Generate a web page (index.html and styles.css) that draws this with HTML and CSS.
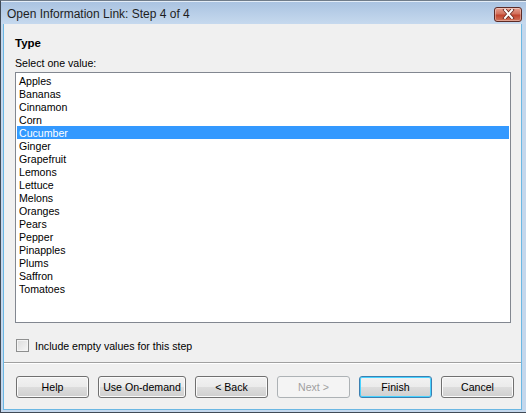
FILE: index.html
```html
<!DOCTYPE html>
<html lang="en">

    <head>
        <meta charset="UTF-8">
        <meta name="viewport" content="width=device-width, initial-scale=1.0">
        <title>Open Information Link</title>
        <link rel="stylesheet" href="styles.css">
    </head>

    <body>
        <div class="window">
            <div class="titlebar">
                <span class="title">Open Information Link: Step 4 of 4</span>
                <button class="btn-close" type="button">
                    <svg width="17" height="10" viewBox="0 0 17 10">
                        <path d="M5 1 L12 9 M12 1 L5 9" stroke="#6a2a22" stroke-width="3.6" stroke-linecap="square" />
                        <path d="M5 1 L12 9 M12 1 L5 9" stroke="#ffffff" stroke-width="2" stroke-linecap="square" />
                    </svg>
                </button>
            </div>
            <div class="client">
                <div class="content">
                    <div class="step-name">Type</div>
                    <div class="prompt">Select one value:</div>
                    <ul class="listbox">
                        <li>Apples</li>
                        <li>Bananas</li>
                        <li>Cinnamon</li>
                        <li>Corn</li>
                        <li class="selected">Cucumber</li>
                        <li>Ginger</li>
                        <li>Grapefruit</li>
                        <li>Lemons</li>
                        <li>Lettuce</li>
                        <li>Melons</li>
                        <li>Oranges</li>
                        <li>Pears</li>
                        <li>Pepper</li>
                        <li>Pinapples</li>
                        <li>Plums</li>
                        <li>Saffron</li>
                        <li>Tomatoes</li>
                    </ul>
                    <label class="check">
                        <span class="check-box"></span>
                        Include empty values for this step
                    </label>
                </div>
                <div class="separator"></div>
                <div class="buttons">
                    <button type="button">Help</button>
                    <button type="button" class="btn-wide">Use On-demand</button>
                    <button type="button">&lt; Back</button>
                    <button type="button" class="btn-disabled">Next &gt;</button>
                    <button type="button" class="btn-default">Finish</button>
                    <button type="button">Cancel</button>
                </div>
            </div>
        </div>
    </body>

</html>
```

FILE: styles.css
```css
body {
    margin: 0;
    font-family: "Liberation Sans", Arial, sans-serif;
    font-size: 10.6px;
    color: #000;
}

.window {
    width: 526px;
    height: 413px;
    box-sizing: border-box;
    background: #c4d7ec;
    border: 1px solid #404a56;
    border-right: none;
    border-top-color: #707c8a;
    padding: 0 4px 2px 2px;
    display: flex;
    flex-direction: column;
}

.titlebar {
    height: 22px;
    display: flex;
    align-items: center;
    justify-content: space-between;
    background: linear-gradient(#aac3e1, #c6d9ee);
    margin: 0 -4px 0 -2px;
    padding: 0 4px 0 6px;
    border-top: 1px solid #e4edf7;
}

.title {
    font-family: "Liberation Sans", Arial, sans-serif;
    font-size: 12px;
    color: #1e1e1e;
    padding-top: 1px;
}

.btn-close {
    width: 28px;
    height: 15px;
    margin-top: 2px;
    padding: 0;
    border: 1px solid #5c2a26;
    border-radius: 3px;
    background: linear-gradient(#e7a08f 0%, #d2705c 45%, #c1442e 55%, #d0735a 100%);
    display: flex;
    align-items: center;
    justify-content: center;
    box-shadow: inset 0 0 0 1px rgba(255, 255, 255, 0.35);
}

.client {
    flex: 1;
    background: #f0f0f0;
    border-left: 1px solid #6bb7e3;
    border-right: 1px solid #6bb7e3;
    border-bottom: 1px solid #6bb7e3;
    display: flex;
    flex-direction: column;
}

.content {
    padding: 0 10px 0 11px;
}

.step-name {
    font-weight: bold;
    font-size: 11.5px;
    margin-top: 13px;
    height: 20px;
}

.prompt {
    height: 15px;
}

.listbox {
    list-style: none;
    margin: 0;
    padding: 1px;
    height: 247px;
    background: #fff;
    border: 1px solid #828790;
}

.listbox li {
    height: 13px;
    line-height: 14px;
    padding-left: 2px;
}

.listbox .selected {
    background: #3399ff;
    color: #fff;
}

.check {
    display: flex;
    align-items: center;
    gap: 6px;
    margin-top: 16px;
    margin-left: 1px;
    height: 13px;
}

.check-box {
    width: 11px;
    height: 11px;
    border: 1px solid #8e8f8f;
    background: linear-gradient(135deg, #dcdcdc, #f6f6f6);
    box-shadow: inset 0 0 0 1px #f4f4f4;
}

.separator {
    margin-top: 10px;
    border-top: 1px solid #a0a0a0;
    border-bottom: 1px solid #ffffff;
}

.buttons {
    display: flex;
    gap: 9px;
    padding: 12px 0 0 12px;
}

.buttons button {
    width: 73px;
    height: 22px;
    padding: 0;
    font-family: "Liberation Sans", Arial, sans-serif;
    font-size: 10.6px;
    color: #000;
    border: 1px solid #707070;
    border-radius: 3px;
    background: linear-gradient(#f2f2f2 0%, #ebebeb 50%, #dddddd 50%, #cfcfcf 100%);
    box-shadow: inset 0 0 0 1px #fbfbfb;
}

.buttons .btn-wide {
    width: 88px;
}

.buttons .btn-disabled {
    color: #a0a0a0;
    border-color: #adb2b5;
    background: #f4f4f4;
    box-shadow: none;
}

.buttons .btn-default {
    border-color: #3c7fb1;
    box-shadow: inset 0 0 0 1px #48d2ff;
}
```
